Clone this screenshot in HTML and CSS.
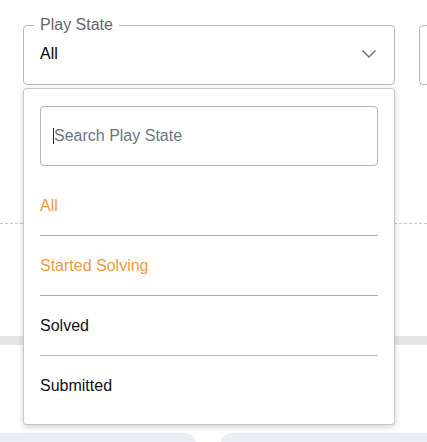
FILE: index.html
```html
<!DOCTYPE html>
<html lang="en">
<head>
<meta charset="utf-8">
<title>Play State filter</title>
<link rel="stylesheet" href="styles.css">
</head>
<body>
<div class="page">
  <div class="filters">
    <fieldset class="select">
      <legend class="select-label">Play State</legend>
      <div class="select-row">
        <span class="select-value">All</span>
        <svg class="chevron" width="16" height="10" viewBox="0 0 16 10" aria-hidden="true">
          <path d="M1.5 1.5 L8 8 L14.5 1.5" fill="none" stroke="#6b6b6b" stroke-width="1.4"/>
        </svg>
      </div>
    </fieldset>
    <fieldset class="select select-second">
      <legend class="select-label hidden-label"></legend>
      <div class="select-row"></div>
    </fieldset>
  </div>

  <div class="bg-box"></div>
  <div class="bg-dash"></div>
  <div class="bg-band"></div>
  <div class="bg-cards">
    <div class="bg-card bg-card-left"></div>
    <div class="bg-card bg-card-right"></div>
  </div>

  <div class="dropdown">
    <div class="search">
      <input class="search-input" type="text" placeholder="Search Play State">
      <span class="caret"></span>
    </div>
    <ul class="options">
      <li class="option active">All</li>
      <li class="option active">Started Solving</li>
      <li class="option">Solved</li>
      <li class="option">Submitted</li>
    </ul>
  </div>
</div>
</body>
</html>
```

FILE: styles.css
```css
html, body {
  margin: 0;
  padding: 0;
  background: #ffffff;
}
body {
  width: 427px;
  height: 442px;
  overflow: hidden;
  font-family: "Liberation Sans", Arial, sans-serif;
  font-size: 16px;
  color: #111;
}
.page {
  position: relative;
  padding-top: 16px;
}
.filters {
  display: flex;
  gap: 24px;
  padding-left: 23px;
}
.select {
  flex: none;
  box-sizing: border-box;
  width: 372px;
  margin: 0;
  padding: 0 10px 0 10px;
  border: 1px solid #b8b8b8;
  border-radius: 4px;
  min-width: 0;
}
.select-second {
  width: 200px;
}
.select-label {
  padding: 0 6px;
  font-size: 16px;
  line-height: 18px;
  color: #666;
}
.hidden-label {
  padding: 0;
  height: 18px;
}
.select-row {
  display: flex;
  align-items: center;
  justify-content: space-between;
  height: 60px;
  padding: 0 6px 0 6px;
  margin-top: -10px;
}
.select-value {
  color: #000;
}
.chevron {
  display: block;
  margin-right: 1px;
}

.bg-box {
  box-sizing: border-box;
  height: 66px;
  margin: 37px 32px 0 23px;
  border: 1px solid #707070;
  border-radius: 4px;
}
.bg-dash {
  margin-top: 35px;
  border-top: 1px dashed #c8c8c8;
}
.bg-band {
  margin-top: 112px;
  height: 9px;
  background: #e6e6e6;
}
.bg-cards {
  display: flex;
  gap: 25px;
  margin-top: 88px;
  margin-left: -20px;
}
.bg-card {
  flex: none;
  height: 20px;
  background: #e8eef5;
  border-radius: 10px 10px 0 0;
}
.bg-card-left {
  width: 216px;
}
.bg-card-right {
  width: 240px;
}

.dropdown {
  position: absolute;
  left: 23px;
  top: 88px;
  width: 372px;
  box-sizing: border-box;
  padding: 17px 16px 8px 16px;
  background: #fff;
  border: 1px solid rgba(0, 0, 0, 0.22);
  border-radius: 4px;
  box-shadow: 0 2px 6px rgba(0, 0, 0, 0.18);
}
.search {
  position: relative;
}
.search-input {
  display: block;
  box-sizing: border-box;
  width: 100%;
  height: 60px;
  margin: 0;
  padding: 0 12px 0 13px;
  border: 1px solid #b5b5b5;
  border-radius: 4px;
  font-family: "Liberation Sans", Arial, sans-serif;
  font-size: 16px;
  color: #111;
  outline: none;
  background: #fff;
}
.search-input::placeholder {
  color: #6d7582;
  opacity: 1;
}
.caret {
  position: absolute;
  left: 13px;
  top: 22px;
  width: 1px;
  height: 16px;
  background: #222;
}
.options {
  list-style: none;
  margin: 10px 0 0 0;
  padding: 0;
}
.option {
  box-sizing: border-box;
  display: flex;
  align-items: center;
  height: 60px;
  border-bottom: 1px solid #bdbdbd;
  color: #111;
}
.option:last-child {
  border-bottom: none;
}
.option.active {
  color: #f29a3a;
  border-bottom-color: #efa140;
}
```
